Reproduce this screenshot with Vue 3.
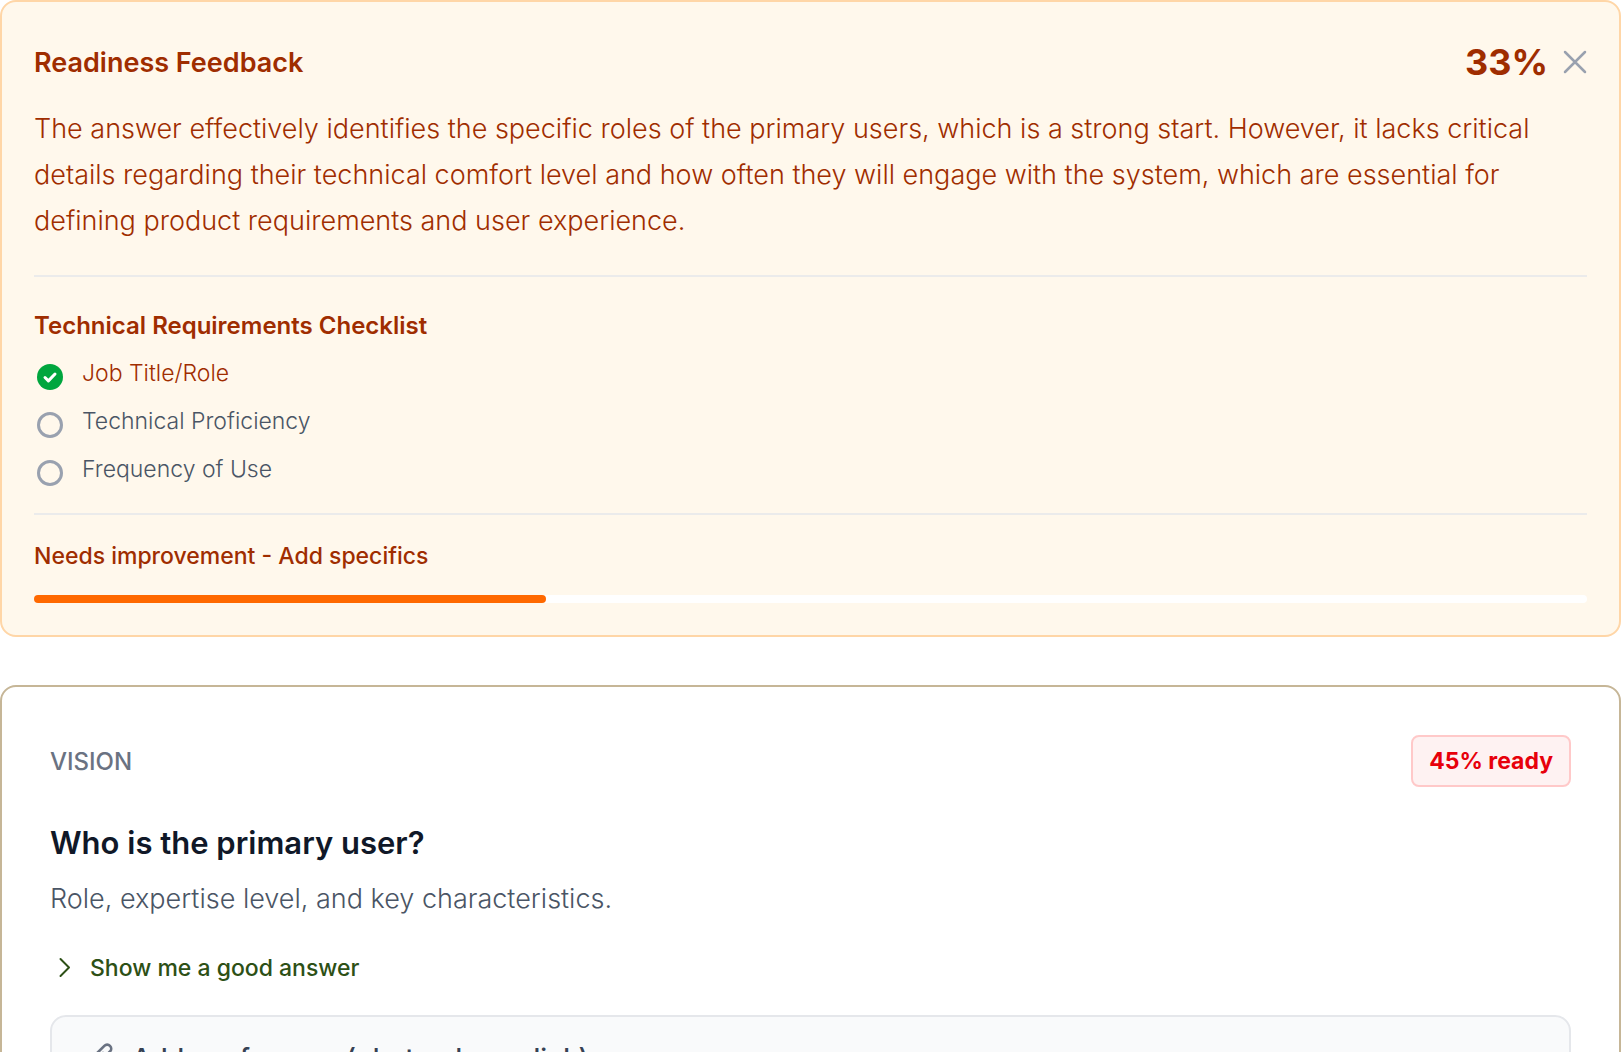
<script setup>
import { ref } from "vue"

const score = ref(33)
const showFeedback = ref(true)
const showExample = ref(false)

const feedback = "The answer effectively identifies the specific roles of the primary users, which is a strong start. However, it lacks critical details regarding their technical comfort level and how often they will engage with the system, which are essential for defining product requirements and user experience."

const checklist = ref([
  { label: "Job Title/Role", done: true },
  { label: "Technical Proficiency", done: false },
  { label: "Frequency of Use", done: false }
])
</script>

<template>
  <main class="page">
    <section v-if="showFeedback" class="feedback">
      <header>
        <h3>Readiness Feedback</h3>
        <div class="score">
          <strong>{{ score }}%</strong>
          <button @click="showFeedback = false" aria-label="Close">
            <svg width="24" height="24" viewBox="0 0 24 24"><path d="M2 2l20 20M22 2L2 22" /></svg>
          </button>
        </div>
      </header>
      <p class="summary">{{ feedback }}</p>

      <div class="checklist">
        <h4>Technical Requirements Checklist</h4>
        <ul>
          <li v-for="item in checklist" :key="item.label" :class="{ done: item.done }">
            <svg v-if="item.done" width="26" height="26" viewBox="0 0 26 26">
              <circle cx="13" cy="13" r="13" class="disc" />
              <path d="M8 13.5l3.4 3.4L18 10" class="tick" />
            </svg>
            <svg v-else width="26" height="26" viewBox="0 0 26 26">
              <circle cx="13" cy="13" r="11.5" class="ring" />
            </svg>
            <span>{{ item.label }}</span>
          </li>
        </ul>
      </div>

      <div class="status">
        <p>Needs improvement - Add specifics</p>
        <div class="bar"><div class="fill" :style="{ width: score + '%' }"></div></div>
      </div>
    </section>

    <section class="question">
      <header>
        <span class="category">VISION</span>
        <span class="badge">45% ready</span>
      </header>
      <h2>Who is the primary user?</h2>
      <p class="hint">Role, expertise level, and key characteristics.</p>
      <button class="example" @click="showExample = !showExample">
        <svg width="28" height="28" viewBox="0 0 28 28"><path d="M10.500 5l8.500 8.500-8.500 8.500" /></svg>
        Show me a good answer
      </button>
      <button class="reference">
        <svg class="clip" width="32" height="32" viewBox="0 0 24 24"><path d="M18.375 11.739l-7.693 7.693a4.500 4.500 0 0 1-6.364-6.364l10.940-10.940A3 3 0 1 1 19.500 6.372L8.552 17.320a1.500 1.500 0 0 1-2.121-2.121l7.810-7.810" /></svg>
        <span>Add a reference (photo, demo, link)</span>
        <svg class="chevron" width="32" height="32" viewBox="0 0 24 24"><path d="M19.500 8.250l-7.500 7.500-7.500-7.500" /></svg>
      </button>
    </section>
  </main>
</template>

<style>
body {
  margin: 0;
  overflow: hidden;
}
</style>

<style scoped>
* {
  box-sizing: border-box;
}

.page {
  font-family: Inter, sans-serif;
  height: 100vh;
  overflow: hidden;
  display: flex;
  flex-direction: column;
  gap: 48px;
  padding-right: 1px;
  background-color: #fff;
}

h2, h3, h4, p, ul {
  margin: 0;
  padding: 0;
}

button {
  font-family: inherit;
  border: 0;
  padding: 0;
  background: none;
  cursor: pointer;
}

svg {
  display: block;
  flex-shrink: 0;
  fill: none;
  stroke: currentColor;
  stroke-width: 2;
  stroke-linecap: round;
  stroke-linejoin: round;
}

section {
  flex-shrink: 0;
  border: 2px solid;
  border-radius: 16px;
}

header {
  display: flex;
  align-items: center;
  justify-content: space-between;
}

.feedback {
  padding: 32px;
  color: #9f2d00;
  background-color: #fff8ec;
  border-color: #ffd6a7;
}

.feedback header {
  height: 56px;
  margin-bottom: 16px;
}

h3 {
  font-size: 27px;
  font-weight: 600;
}

.score {
  display: flex;
  align-items: center;
  gap: 15px;
}

.score strong {
  font-size: 36px;
  font-weight: 700;
}

.score button {
  color: #99a1af;
}

.score svg {
  stroke-width: 2.5;
}

.summary {
  font-size: 27px;
  font-weight: 300;
  line-height: 46px;
}

.checklist {
  margin-top: 31px;
  padding: 32px 0 24px;
  border-top: 2px solid #ebebeb;
  border-bottom: 2px solid #ebebeb;
}

h4 {
  font-size: 24px;
  line-height: 34px;
  font-weight: 600;
  margin-bottom: 10px;
}

ul {
  list-style: none;
  display: flex;
  flex-direction: column;
  gap: 8px;
}

li {
  display: flex;
  gap: 19px;
  padding-left: 3px;
  font-size: 23px;
  font-weight: 300;
  line-height: 40px;
  color: #4a5565;
}

li svg {
  margin-top: 11px;
}

li.done {
  color: #9f2d00;
}

.disc {
  fill: #00a63e;
  stroke: none;
}

.tick {
  stroke: #fff;
  stroke-width: 3;
}

.ring {
  stroke: #99a1af;
  stroke-width: 3;
}

.status p {
  font-size: 23px;
  font-weight: 500;
  line-height: 34px;
  margin: 24px 0 22px;
}

.bar {
  height: 8px;
  border-radius: 4px;
  background-color: #fff;
}

.fill {
  height: 100%;
  border-radius: 4px;
  background-color: #ff6900;
}

.question {
  padding: 48px;
  border-color: #c6b697;
}

.category {
  font-size: 24px;
  font-weight: 500;
  color: #6a7282;
}

.badge {
  padding: 0 16px;
  border: 2px solid #ffc9c9;
  border-radius: 8px;
  background-color: #fef2f2;
  color: #e7000b;
  font-size: 23px;
  font-weight: 700;
  line-height: 48px;
}

h2 {
  margin: 32px 0 8px;
  font-size: 31px;
  line-height: 48px;
  font-weight: 600;
  color: #101828;
}

.hint {
  font-size: 27px;
  font-weight: 300;
  line-height: 48px;
  color: #4a5565;
}

.example {
  display: flex;
  align-items: center;
  gap: 12px;
  margin: 22px 0 24px;
  font-size: 23px;
  font-weight: 500;
  line-height: 46px;
  color: #2d5016;
}

.reference {
  display: flex;
  align-items: center;
  gap: 16px;
  width: 100%;
  padding: 24px 32px;
  border: 2px solid #e5e7eb;
  border-radius: 16px;
  background-color: #f9fafb;
  font-size: 27px;
  font-weight: 500;
  line-height: 36px;
  color: #364153;
  text-align: left;
}

.reference span {
  flex: 1;
}

.clip {
  color: #6a7282;
}

.chevron {
  color: #99a1af;
}
</style>
